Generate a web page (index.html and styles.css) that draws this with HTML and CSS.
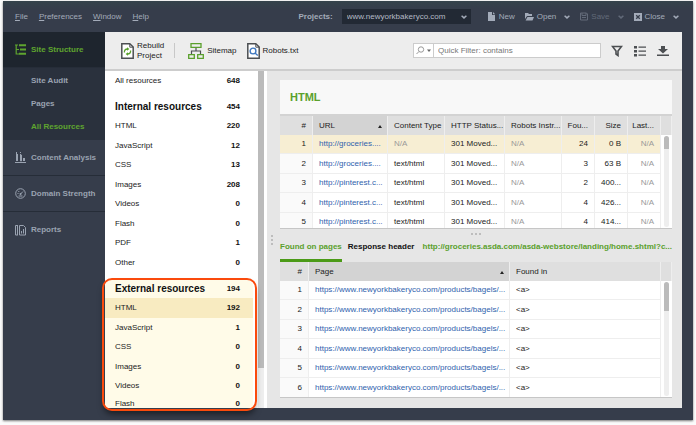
FILE: index.html
```html
<!DOCTYPE html>
<html lang="en">
  <head>
    <meta charset="UTF-8">
    <meta name="viewport" content="width=device-width, initial-scale=1.0">
    <title>Site Structure - All Resources</title>
    <link rel="stylesheet" href="styles.css">
  </head>
  <body>
    <div class="app">

      <header class="topbar">
        <nav class="menu">
          <button type="button"><u>F</u>ile</button>
          <button type="button"><u>P</u>references</button>
          <button type="button"><u>W</u>indow</button>
          <button type="button"><u>H</u>elp</button>
        </nav>
        <div class="project">
          <label for="project">Projects:</label>
          <div class="select-box">
            <select id="project">
              <option>www.newyorkbakeryco.com</option>
            </select>
            <svg class="chevron" viewBox="0 0 6 4"><path d="M.6.8 3 2.9 5.4.8"/></svg>
          </div>
        </div>
        <div class="actions">
          <button type="button" class="action">
            <svg width="8" height="9" viewBox="0 0 8 9"><path fill="currentColor" d="M0 0h4v3h3v6H0zM5 0l2.200 2.200H5z"/></svg>
            New
          </button>
          <button type="button" class="action">
            <svg width="9" height="9" viewBox="0 0 9 9"><path fill="currentColor" d="M0 1h3l1 1h3v2H2L0 7zM2.500 5H9L7.500 8.500H.6z"/></svg>
            Open
            <svg class="chevron" viewBox="0 0 6 4"><path d="M.6.8 3 2.900 5.400.8"/></svg>
          </button>
          <button type="button" class="action" disabled>
            <svg width="8" height="9" viewBox="0 0 8 9"><path fill="none" stroke="currentColor" d="M.5 1h6l1 1v6H.5zM2 1v2.500h4V1M2 5.500h4"/></svg>
            Save
            <svg class="chevron" viewBox="0 0 6 4"><path d="M.6.8 3 2.900 5.400.8"/></svg>
          </button>
          <button type="button" class="action">
            <svg width="8" height="8" viewBox="0 0 8 8"><path fill="currentColor" d="M0 0h8v8H0z"/><path stroke="#363d4b" stroke-width="1.300" d="m2.200 2.200 3.600 3.600M5.800 2.200 2.200 5.800"/></svg>
            Close
            <svg class="chevron" viewBox="0 0 6 4"><path d="M.6.8 3 2.900 5.400.8"/></svg>
          </button>
        </div>
      </header>

      <div class="body">
        <nav class="sidebar">
          <a href="#" class="nav-item active">
            <svg width="11" height="11" viewBox="0 0 11 11"><path fill="none" stroke="currentColor" stroke-width="1.200" d="M0 1h3M1.200 1v9H4M1.200 5.500H4"/><path fill="none" stroke="currentColor" stroke-width="2" d="M4 1.200h7M5 5.500h6M4 9.800h7"/></svg>
            Site Structure
          </a>
          <div class="subnav">
            <a href="#">Site Audit</a>
            <a href="#">Pages</a>
            <a href="#" class="current">All Resources</a>
          </div>
          <a href="#" class="nav-item">
            <svg width="11" height="11" viewBox="0 0 11 11"><path fill="currentColor" d="M0 10h11v1H0zM1 2h2v7H1zM8 6h2v3H8z"/><path fill="none" stroke="currentColor" d="M1.500 0v2M5.500 0v1m0 1v7h1V3h-1"/></svg>
            Content Analysis
          </a>
          <a href="#" class="nav-item">
            <svg width="11" height="11" viewBox="0 0 11 11"><g fill="none" stroke="currentColor"><circle cx="5.500" cy="5.500" r="4.800"/><path d="M5.500 6 8 3.500M2.500 5.500h1M3.300 3l1 1M3.500 8h4"/></g><circle cx="5.500" cy="6" r="1" fill="currentColor"/></svg>
            Domain Strength
          </a>
          <a href="#" class="nav-item last">
            <svg width="11" height="11" viewBox="0 0 11 11"><path fill="none" stroke="currentColor" d="M3 .5H.5V10H3M2.500.5V10M4.500.5h4l2 2V10h-6zM6.500 8.500V6M8.500 8.500V4"/></svg>
            Reports
          </a>
        </nav>

        <main class="panel">
          <div class="toolbar">
            <button type="button" class="tool">
              <svg width="13" height="16" viewBox="0 0 13 16"><path fill="#fff" stroke="#4c4f52" stroke-width="1.500" d="M.8.8h8L12.200 4v11.200H.8z"/><path fill="none" stroke="#4c4f52" d="M8.800 1v3.200H12"/><path fill="none" stroke="#5aa02c" stroke-width="1.300" d="M3.500 9.500c-.5-2 .8-3.500 3-3.500M9.500 7.500c.5 2-.8 3.500-3 3.500"/><path fill="#5aa02c" d="M6 4.200 8.400 6 6 7.800zM7 9.200 4.600 11 7 12.800z"/></svg>
              <span>Rebuild<br>Project</span>
            </button>
            <span class="divider"></span>
            <button type="button" class="tool sitemap">
              <svg width="16" height="16" viewBox="0 0 16 16"><path fill="none" stroke="#5aa02c" stroke-width="1.300" d="M3 .7h10v3.600H3zM.7 11.700h5.600v3.600H.7zM9.700 11.700h5.600v3.600H9.700z"/><path fill="none" stroke="#4c4f52" stroke-width="1.200" d="M8 5v3M3.500 11V8h9v3"/></svg>
              Sitemap
            </button>
            <button type="button" class="tool">
              <svg width="13" height="16" viewBox="0 0 13 16"><path fill="#fff" stroke="#4c4f52" stroke-width="1.500" d="M.8.8h8L12.200 4v11.200H.8z"/><path fill="none" stroke="#4c4f52" d="M8.800 1v3.200H12"/><g fill="none" stroke="#3f78c0" stroke-width="1.400"><circle cx="6" cy="8" r="2.900"/><path d="m8 10 2.800 2.500"/></g></svg>
              Robots.txt
            </button>
            <div class="search">
              <button type="button" class="search-type" aria-label="Filter options">
                <svg width="15" height="9" viewBox="0 0 15 9"><g fill="none" stroke="#999"><circle cx="5" cy="3.500" r="2.700"/><path d="M3 5.500.5 8"/></g><path fill="#666" d="M11 3.500h4L13 6z"/></svg>
              </button>
              <input type="text" placeholder="Quick Filter: contains" aria-label="Quick Filter">
            </div>
            <div class="tool-icons">
              <button type="button" aria-label="Filter"><svg width="12" height="12" viewBox="0 0 12 12"><path fill="none" stroke="#4c4f52" stroke-width="1.600" d="M1.500 1.500h9L7 6v4.500L5 9V6z"/></svg></button>
              <button type="button" aria-label="Columns"><svg width="12" height="12" viewBox="0 0 12 12"><path fill="#4c4f52" d="M0 1h3v2.500H0zM0 5h3v2.500H0zM0 9h3v2.500H0zM4.500 1.500H12v1.300H4.500zM4.500 5.500H12v1.300H4.500zM4.500 9.500H12v1.300H4.500z"/></svg></button>
              <button type="button" aria-label="Download"><svg width="12" height="12" viewBox="0 0 12 12"><path fill="#4c4f52" d="M4 1h4v3h3L6 8.500 1 4h3zM0 9.500h12V11H0z"/></svg></button>
            </div>
          </div>

          <div class="content">
            <section class="resources">
              <div class="resource-list">
                <ul class="group all">
                  <li><span>All resources</span><b>648</b></li>
                </ul>
                <ul class="group">
                  <li class="heading"><span>Internal resources</span><b>454</b></li>
                  <li><span>HTML</span><b>220</b></li>
                  <li><span>JavaScript</span><b>12</b></li>
                  <li><span>CSS</span><b>13</b></li>
                  <li><span>Images</span><b>208</b></li>
                  <li><span>Videos</span><b>0</b></li>
                  <li><span>Flash</span><b>0</b></li>
                  <li><span>PDF</span><b>1</b></li>
                  <li><span>Other</span><b>0</b></li>
                </ul>
                <ul class="group external">
                  <li class="heading"><span>External resources</span><b>194</b></li>
                  <li class="selected"><span>HTML</span><b>192</b></li>
                  <li><span>JavaScript</span><b>1</b></li>
                  <li><span>CSS</span><b>0</b></li>
                  <li><span>Images</span><b>0</b></li>
                  <li><span>Videos</span><b>0</b></li>
                  <li><span>Flash</span><b>0</b></li>
                </ul>
              </div>
              <div class="list-scroll"></div>
              <div class="callout"></div>
            </section>

            <div class="splitter vertical"><i></i><i></i><i></i></div>

            <section class="details">
              <div class="card">
                <h2>HTML</h2>
                <div class="table-wrap top">
                  <table>
                    <colgroup>
                      <col class="w-num"><col><col class="w-text"><col class="w-status"><col class="w-text"><col class="w-short"><col class="w-short"><col class="w-short"><col class="w-scroll">
                    </colgroup>
                    <thead>
                      <tr><th class="num">#</th><th class="sorted">URL</th><th>Content Type</th><th>HTTP Status...</th><th>Robots Instr...</th><th class="num">Fou...</th><th class="num">Size</th><th class="num">Last...</th><th></th></tr>
                    </thead>
                    <tbody>
                      <tr class="selected"><td class="num">1</td><td><a href="#">http://groceries....</a></td><td class="na">N/A</td><td>301 Moved...</td><td class="na">N/A</td><td class="num">24</td><td class="num">0 B</td><td class="num na">N/A</td><td class="gutter"></td></tr>
                      <tr><td class="num">2</td><td><a href="#">http://groceries....</a></td><td>text/html</td><td>301 Moved...</td><td class="na">N/A</td><td class="num">3</td><td class="num">63 B</td><td class="num na">N/A</td><td class="gutter"></td></tr>
                      <tr><td class="num">3</td><td><a href="#">http://pinterest.c...</a></td><td>text/html</td><td>301 Moved...</td><td class="na">N/A</td><td class="num">2</td><td class="num">400...</td><td class="num na">N/A</td><td class="gutter"></td></tr>
                      <tr><td class="num">4</td><td><a href="#">http://pinterest.c...</a></td><td>text/html</td><td>301 Moved...</td><td class="na">N/A</td><td class="num">4</td><td class="num">426...</td><td class="num na">N/A</td><td class="gutter"></td></tr>
                      <tr><td class="num">5</td><td><a href="#">http://pinterest.c...</a></td><td>text/html</td><td>301 Moved...</td><td class="na">N/A</td><td class="num">4</td><td class="num">414...</td><td class="num na">N/A</td><td class="gutter"></td></tr>
                    </tbody>
                  </table>
                  <div class="table-scroll"></div>
                </div>
              </div>

              <div class="splitter"><i></i><i></i><i></i></div>

              <div class="tabs">
                <button type="button" class="tab active">Found on pages</button>
                <button type="button" class="tab">Response header</button>
                <a href="#" class="page-url">http://groceries.asda.com/asda-webstore/landing/home.shtml?c...</a>
              </div>

              <div class="card">
                <div class="table-wrap pages">
                  <table>
                    <colgroup>
                      <col class="w-index"><col class="w-page"><col><col class="w-scroll">
                    </colgroup>
                    <thead>
                      <tr><th class="num">#</th><th class="sorted">Page</th><th>Found in</th><th></th></tr>
                    </thead>
                    <tbody>
                      <tr><td class="num">1</td><td><a href="#">https://www.newyorkbakeryco.com/products/bagels/...</a></td><td>&lt;a&gt;</td><td class="gutter"></td></tr>
                      <tr><td class="num">2</td><td><a href="#">https://www.newyorkbakeryco.com/products/bagels/...</a></td><td>&lt;a&gt;</td><td class="gutter"></td></tr>
                      <tr><td class="num">3</td><td><a href="#">https://www.newyorkbakeryco.com/products/bagels/...</a></td><td>&lt;a&gt;</td><td class="gutter"></td></tr>
                      <tr><td class="num">4</td><td><a href="#">https://www.newyorkbakeryco.com/products/bagels/...</a></td><td>&lt;a&gt;</td><td class="gutter"></td></tr>
                      <tr><td class="num">5</td><td><a href="#">https://www.newyorkbakeryco.com/products/bagels/...</a></td><td>&lt;a&gt;</td><td class="gutter"></td></tr>
                      <tr><td class="num">6</td><td><a href="#">https://www.newyorkbakeryco.com/products/bagels/...</a></td><td>&lt;a&gt;</td><td class="gutter"></td></tr>
                    </tbody>
                  </table>
                  <div class="table-scroll long"></div>
                </div>
              </div>
            </section>
          </div>
        </main>
      </div>
    </div>
  </body>
</html>
```

FILE: styles.css
```css
* {
  box-sizing: border-box;
}
body {
  margin: 0;
  padding: 1px 3px 5px;
  height: 100vh;
  background: #fbfbfb;
  font-family: "Liberation Sans", Arial, sans-serif;
  font-size: 8px;
  line-height: 10px;
  color: #222;
}
button, input, select {
  margin: 0;
  padding: 0;
  border: none;
  background: transparent;
  font: inherit;
  color: inherit;
}
a {
  color: inherit;
  text-decoration: none;
}
ul {
  margin: 0;
  padding: 0;
  list-style: none;
}
svg {
  flex: none;
}
.app {
  display: flex;
  flex-direction: column;
  height: 100%;
  background: #363d4b;
  box-shadow: 0 1px 2px #777;
}

/* top bar */
.topbar {
  display: flex;
  align-items: center;
  flex: none;
  height: 31px;
  padding: 0 14px 0 12px;
  background: linear-gradient(#35434b, #363d4b 8px);
  color: #a3abb9;
}
.menu {
  display: flex;
  gap: 11px;
}
.project {
  display: flex;
  align-items: center;
  gap: 9px;
  margin-left: auto;
  font-weight: bold;
}
.select-box {
  position: relative;
}
.select-box select {
  appearance: none;
  width: 129px;
  height: 15px;
  padding: 0 5px;
  background: #222934;
  font-weight: normal;
  color: #b4bac5;
}
.select-box .chevron {
  position: absolute;
  right: 4px;
  top: 6px;
}
.chevron {
  width: 6px;
  height: 4px;
  fill: none;
  stroke: currentColor;
  stroke-width: 1.5;
}
.actions {
  display: flex;
  gap: 10px;
  margin-left: 17px;
}
.action {
  display: flex;
  align-items: center;
  gap: 3px;
}
.action .chevron {
  margin-left: 5px;
}
.action:disabled {
  color: #626a79;
}

/* left navigation */
.body {
  display: flex;
  flex: 1;
  min-height: 0;
  padding: 0 11px 12px 0;
}
.sidebar {
  flex: none;
  width: 102px;
  font-weight: bold;
  color: #9aa3b1;
}
.nav-item {
  display: flex;
  align-items: center;
  gap: 5px;
  height: 36px;
  padding-left: 12px;
  border-bottom: 1px solid #262d38;
}
.nav-item.active {
  background: #1e252e;
  color: #5fa52f;
}
.nav-item.last {
  border-bottom: none;
}
.subnav {
  display: flex;
  flex-direction: column;
  gap: 13px;
  padding: 8px 0 8px 28px;
  background: #2a313d;
}
.subnav .current {
  color: #5fa52f;
}

/* toolbar */
.panel {
  display: flex;
  flex-direction: column;
  flex: 1;
  min-width: 0;
  background: #e6e6e6;
}
.toolbar {
  display: flex;
  align-items: center;
  flex: none;
  height: 39px;
  padding: 0 13px 0 16px;
  border-bottom: 2px solid #cdcdcd;
  background: #ededed;
}
.tool {
  display: flex;
  align-items: center;
  gap: 3px;
  text-align: left;
}
.divider {
  width: 1px;
  height: 15px;
  margin: 0 13px 0 10px;
  background: #c8c8c8;
}
.sitemap {
  margin-right: 10px;
}
.search {
  display: flex;
  width: 188px;
  height: 15px;
  margin-left: auto;
  border: 1px solid #ccc;
  background: #fff;
}
.search-type {
  display: flex;
  align-items: center;
  justify-content: center;
  width: 20px;
  border-right: 1px solid #ccc;
}
.search input {
  flex: 1;
  min-width: 0;
  padding: 0 4px;
}
.search input::placeholder {
  color: #777;
}
.tool-icons {
  display: flex;
  gap: 11px;
  margin-left: 10px;
}
.tool-icons button {
  display: flex;
}

/* resource list */
.content {
  display: flex;
  flex: 1;
  min-height: 0;
}
.resources {
  display: flex;
  position: relative;
  flex: none;
  width: 162px;
  background: #fff;
}
.resource-list {
  flex: 1;
  overflow: hidden;
}
.group {
  margin: 0 5px 7px 0;
}
.group li {
  display: flex;
  align-items: center;
  justify-content: space-between;
  height: 19px;
  padding: 0 13px 0 10px;
}
.group li:nth-child(even) {
  height: 20px;
}
.group .heading span {
  font-size: 10px;
  font-weight: bold;
  color: #111;
}
.group b {
  color: #111;
}
.external {
  border-radius: 8px 8px 0 0;
  background: #fffbe8;
}
.external .selected {
  background: #f8ebc1;
}
.external li:last-child {
  height: 16px;
}
.list-scroll {
  width: 9px;
  border-right: 3px solid #fff;
  background: linear-gradient(#bbb, #bbb) 0 0 / 100% 297px no-repeat #eee;
}
.callout {
  position: absolute;
  inset: 207px 10px -3px -3px;
  border: 2px solid #fa4a0c;
  border-radius: 10px;
  box-shadow: 0 5px 6px -2px rgba(0, 0, 0, 0.5);
}

/* splitters */
.splitter {
  display: flex;
  align-items: center;
  justify-content: center;
  gap: 2px;
  height: 9px;
}
.splitter i {
  width: 2px;
  height: 2px;
  background: #bdbdbd;
}
.splitter.vertical {
  flex-direction: column;
  flex: none;
  width: 9px;
  height: auto;
}

/* tables */
.details {
  flex: 1;
  min-width: 0;
  padding: 9px 10px 10px 4px;
}
.card {
  border-bottom: 1px solid #c6c6c6;
  background: #fff;
}
.card h2 {
  margin: 0;
  padding: 11px 10px;
  border-bottom: 2px solid #d3d3d3;
  background: #f8f8f8;
  font-size: 11px;
  line-height: 12px;
  color: #5aa02c;
}
.table-wrap {
  position: relative;
  overflow: hidden;
}
.table-wrap.top {
  height: 112px;
}
.table-wrap.pages {
  height: 135px;
}
table {
  width: 100%;
  table-layout: fixed;
  border-collapse: separate;
  border-spacing: 0;
}
.w-num {
  width: 33px;
}
.w-text {
  width: 57px;
}
.w-status {
  width: 60px;
}
.w-short {
  width: 33px;
}
.w-scroll {
  width: 11px;
}
.w-index {
  width: 29px;
}
.w-page {
  width: 201px;
}
th, td {
  height: 19px;
  padding: 0 0 0 6px;
  border-right: 1px solid #eee;
  border-bottom: 1px solid #eee;
  text-align: left;
  font-weight: normal;
  white-space: nowrap;
  overflow: hidden;
}
tr:nth-child(even) td {
  height: 20px;
}
th {
  border-bottom: none;
  background: #dfdfdf;
}
th.sorted {
  padding-right: 5px;
  background: #d3d3d3;
}
th.sorted::after {
  content: "";
  float: right;
  margin-top: 4px;
  border: 2px solid transparent;
  border-top: none;
  border-bottom: 3px solid #222;
}
th.num, td.num {
  padding: 0 6px 0 2px;
  text-align: right;
}
td:first-child {
  background: #fafafa;
}
td a {
  color: #2f62ad;
}
.na {
  color: #999;
}
tr.selected td {
  background: #f7eed3;
}
td.gutter, tr.selected td.gutter {
  border: none;
  background: #fff;
}
.table-scroll {
  position: absolute;
  top: 20px;
  right: 3px;
  bottom: 1px;
  width: 5px;
  border-radius: 3px;
  background: linear-gradient(#bbb, #bbb) 0 0 / 100% 13px no-repeat #eee;
}
.table-scroll.long {
  background-size: 100% 29px;
}

/* tabs */
.tabs {
  display: flex;
  gap: 6px;
  height: 24px;
  font-weight: bold;
}
.tab, .page-url {
  display: flex;
  align-items: center;
  white-space: nowrap;
}
.tab {
  border-bottom: 3px solid transparent;
  padding-bottom: 3px;
  color: #111;
}
.tab.active {
  color: #5aa02c;
  border-color: #4b9a17;
}
.page-url {
  margin-left: auto;
  padding-bottom: 6px;
  color: #5aa02c;
}
```
